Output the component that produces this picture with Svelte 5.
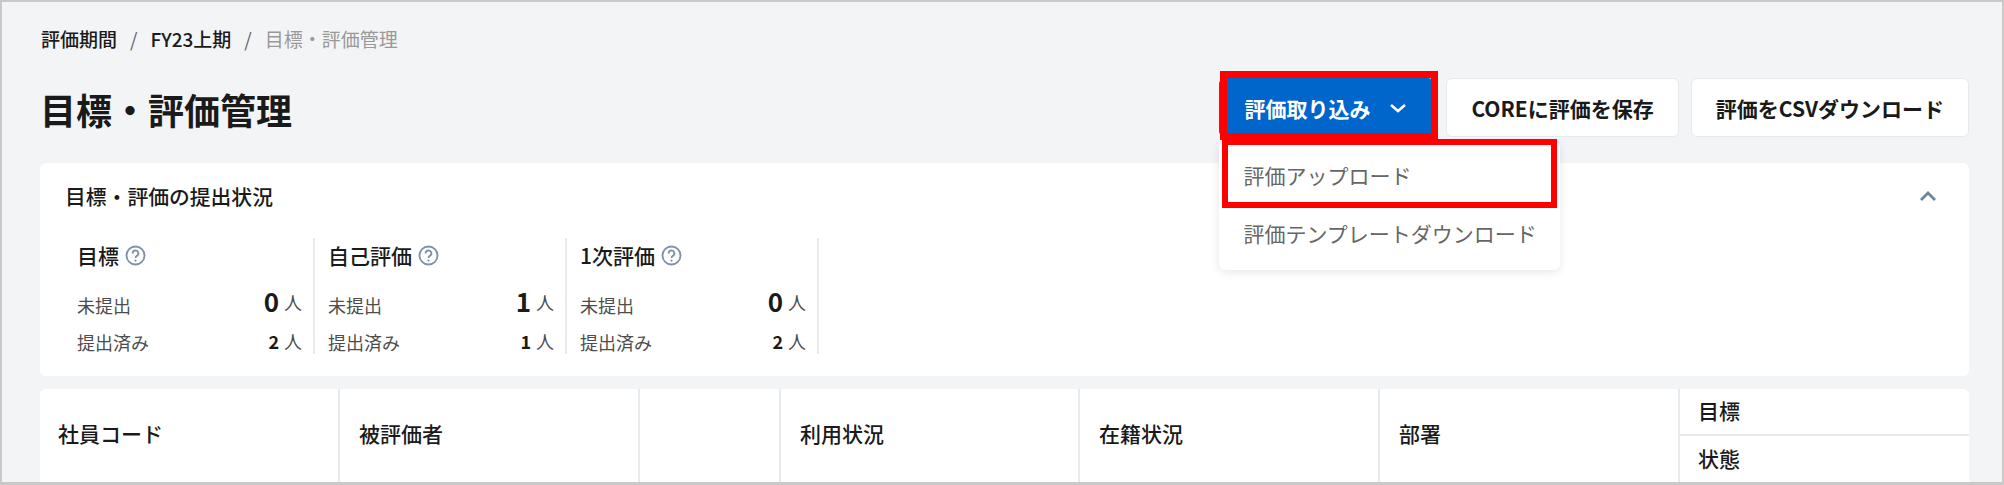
<script>
  const crumbs = ["評価期間", "FY23上期"];
  const stats = [
    { title: "目標", pending: 0, done: 2 },
    { title: "自己評価", pending: 1, done: 1 },
    { title: "1次評価", pending: 0, done: 2 },
  ];
  const columns = ["社員コード", "被評価者", "", "利用状況", "在籍状況", "部署"];
</script>

<div class="page">
  <nav class="breadcrumb">
    {#each crumbs as crumb}
      <a href="#top">{crumb}</a>
      <span class="sep">/</span>
    {/each}
    <span class="current">目標・評価管理</span>
  </nav>

  <header class="head">
    <h1>目標・評価管理</h1>
    <div class="actions">
      <div class="import">
        <button class="btn primary">
          評価取り込み
          <svg width="18" height="10" viewBox="0 0 18 10" fill="none">
            <path d="M2 2l7 6 7-6" stroke="#fff" stroke-width="2.6" />
          </svg>
        </button>
        <span class="mark mark-button"></span>
        <div class="menu">
          <div class="menu-item">評価アップロード</div>
          <div class="menu-item">評価テンプレートダウンロード</div>
          <span class="mark mark-item"></span>
        </div>
      </div>
      <button class="btn">COREに評価を保存</button>
      <button class="btn">評価をCSVダウンロード</button>
    </div>
  </header>

  <section class="card status">
    <div class="status-head">
      <h2>目標・評価の提出状況</h2>
      <svg width="18" height="12" viewBox="0 0 18 12" fill="none">
        <path d="M2 10l7-7 7 7" stroke="#6f8599" stroke-width="2.8" />
      </svg>
    </div>
    <div class="stats">
      {#each stats as stat}
        <div class="stat">
          <div class="stat-title">
            {stat.title}
            <svg width="21" height="21" viewBox="0 0 20 20" fill="none">
              <circle cx="10" cy="10" r="8.6" stroke="#7f93a8" stroke-width="1.8" />
              <path d="M7.3 8a2.7 2.7 0 1 1 4 2.3c-.9.5-1.3 1-1.3 2" stroke="#7f93a8" stroke-width="1.8" />
              <circle cx="10" cy="14.8" r="1.1" fill="#7f93a8" />
            </svg>
          </div>
          <div class="stat-row first">
            <span class="label">未提出</span>
            <span class="value lifted"><b class="big">{stat.pending}</b><i>人</i></span>
          </div>
          <div class="stat-row">
            <span class="label">提出済み</span>
            <span class="value"><b>{stat.done}</b><i>人</i></span>
          </div>
        </div>
      {/each}
    </div>
  </section>

  <section class="card table">
    {#each columns as column}
      <div class="cell">{column}</div>
    {/each}
    <div class="cell split">
      <div>目標</div>
      <div>状態</div>
    </div>
  </section>
</div>

<style>
  :global(body) {
    margin: 0;
  }

  .page {
    position: relative;
    box-sizing: border-box;
    width: 2004px;
    height: 485px;
    padding: 0 33px 0 38px;
    overflow: hidden;
    border: solid #c9c9c9;
    border-width: 2px 2px 3px 2px;
    background: #f3f4f6;
    color: #1a1a1a;
    font-family: "Noto Sans CJK JP", "Noto Sans", sans-serif;
  }

  .breadcrumb {
    display: flex;
    align-items: center;
    gap: 13px;
    height: 28px;
    margin: 22px 0 0 1px;
    font-size: 19px;
    font-weight: 500;
  }

  .breadcrumb a {
    color: #1a1a1a;
    text-decoration: none;
  }

  .sep {
    color: #666;
    font-weight: 400;
  }

  .current {
    color: #999;
    font-weight: 400;
  }

  .head {
    display: flex;
    justify-content: space-between;
    align-items: flex-start;
    height: 85px;
    margin-top: 26px;
  }

  h1 {
    margin: 5px 0 0;
    font-size: 36px;
    line-height: 52px;
    font-weight: 700;
  }

  .actions {
    display: flex;
    gap: 12px;
  }

  .import {
    position: relative;
  }

  .btn {
    display: flex;
    align-items: center;
    height: 59px;
    padding: 0 24px;
    border: 1px solid #e6e9ed;
    border-radius: 6px;
    background: #fff;
    color: #1a1a1a;
    font: inherit;
    font-size: 21px;
    font-weight: 700;
  }

  .primary {
    width: 215px;
    gap: 19px;
    border-color: #0066cc;
    background: #0066cc;
    color: #fff;
  }

  .menu {
    position: absolute;
    top: 64px;
    left: 0;
    z-index: 2;
    box-sizing: border-box;
    width: 341px;
    padding: 6px 0;
    border-radius: 6px;
    background: #fff;
    box-shadow: 0 2px 8px rgba(40, 60, 80, 0.12);
    color: #666;
    font-size: 21px;
  }

  .menu-item {
    display: flex;
    align-items: center;
    height: 58px;
    padding-left: 24px;
    padding-bottom: 5px;
    box-sizing: border-box;
    white-space: nowrap;
  }

  .mark {
    position: absolute;
    z-index: 3;
    box-sizing: border-box;
    border: 6px solid #ff0000;
  }

  .mark-button {
    top: -7px;
    left: 1px;
    width: 218px;
    height: 69px;
    border-width: 7px;
  }

  .mark-item {
    top: -3px;
    left: 3px;
    width: 335px;
    height: 69px;
  }

  .card {
    border-radius: 6px;
    background: #fff;
  }

  .status {
    box-sizing: border-box;
    height: 213px;
    padding: 0 32px 0 23px;
  }

  .status-head {
    display: flex;
    justify-content: space-between;
    align-items: center;
    height: 75px;
    padding-bottom: 9px;
    box-sizing: border-box;
  }

  h2 {
    margin: 0 0 0 2px;
    font-size: 20.8px;
    font-weight: 500;
  }

  .stats {
    display: flex;
    height: 116px;
  }

  .stat {
    box-sizing: border-box;
    width: 252px;
    padding: 0 11px 0 14px;
    border-right: 2px solid #e8ebee;
  }

  .stat + .stat {
    padding-left: 13px;
  }

  .stat-title {
    display: flex;
    align-items: center;
    gap: 6px;
    height: 34px;
    font-size: 21px;
    font-weight: 500;
  }

  .stat-row {
    display: flex;
    justify-content: space-between;
    align-items: center;
    height: 37px;
  }

  .stat-row.first {
    margin-top: 14px;
  }

  .label {
    color: #4d4d4d;
    font-size: 18px;
  }

  .value {
    display: flex;
    align-items: center;
    gap: 5px;
    margin-bottom: 2px;
    line-height: 1;
  }

  .value.lifted {
    margin-bottom: 5px;
  }

  .value b {
    font-size: 18px;
    font-weight: 700;
  }

  .value b.big {
    margin-bottom: 2px;
    font-size: 26px;
    font-weight: 700;
  }

  .value i {
    color: #4d4d4d;
    font-size: 18px;
    font-style: normal;
  }

  .table {
    display: grid;
    grid-template-columns: 300px 300px 141px 299px 300px 300px 1fr;
    height: 100px;
    margin-top: 13px;
    font-size: 21px;
    font-weight: 500;
  }

  .cell {
    display: flex;
    align-items: center;
    box-sizing: border-box;
    height: 100px;
    padding: 0 0 13px 19px;
    border-right: 2px solid #e8ebee;
  }

  .cell:first-child {
    padding-left: 18px;
  }

  .split {
    display: block;
    padding: 0;
    border-right: 0;
  }

  .split div {
    display: flex;
    align-items: center;
    box-sizing: border-box;
    height: 47px;
    padding: 0 0 3px 18px;
  }

  .split div:first-child {
    border-bottom: 2px solid #e8ebee;
  }
</style>
